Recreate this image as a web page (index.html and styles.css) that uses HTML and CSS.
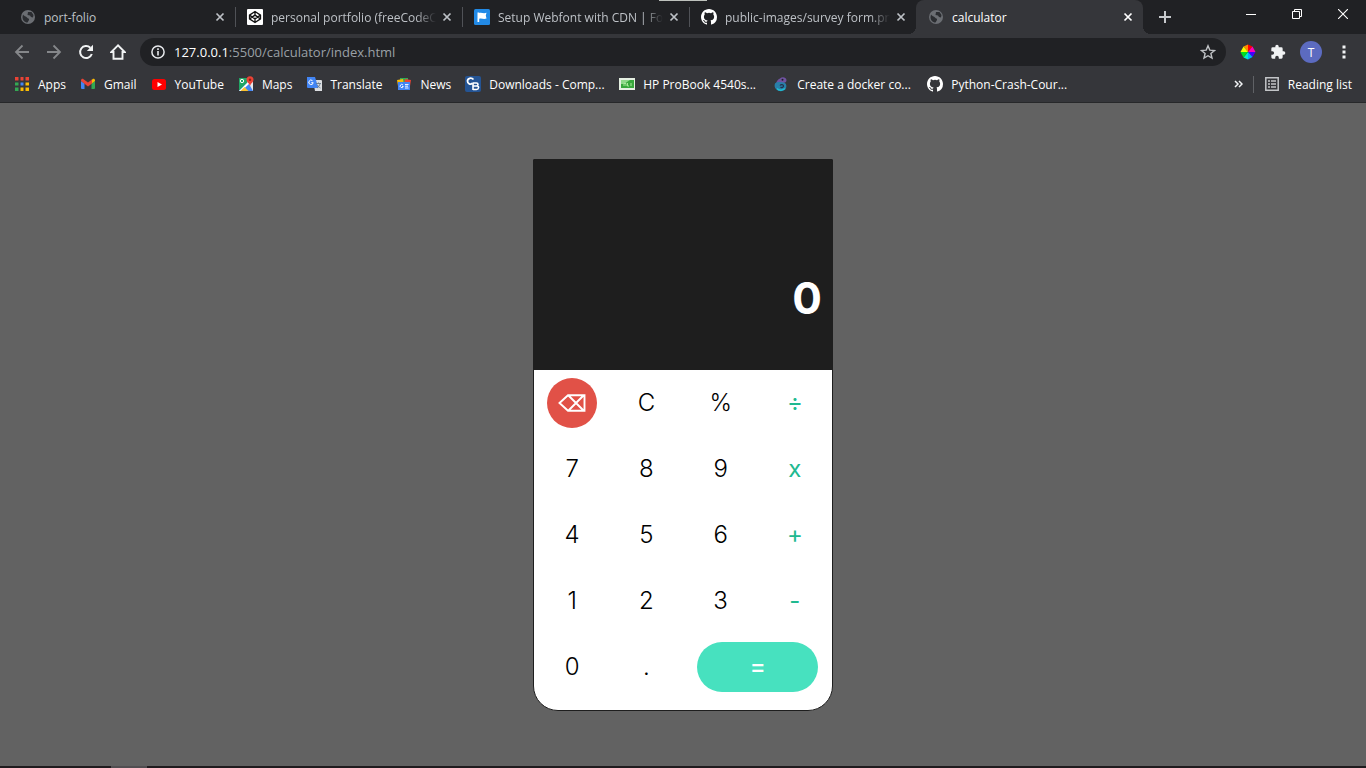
FILE: index.html
```html
<!DOCTYPE html>
<html lang="en">
<head>
<meta charset="utf-8">
<title>calculator</title>
<link rel="stylesheet" href="styles.css">
</head>
<body>
<svg class="defs" width="0" height="0" aria-hidden="true">
  <symbol id="globe" viewBox="0 0 16 16"><circle cx="8" cy="8" r="7" fill="#6b6e73"/><path d="M3 5.500c1 2 3 1.500 4 3 .8 1.200 2.500.8 2 2.500L7.500 13.500C4.500 13.500 2.500 11 2.500 8zM8 3h3.500l2 3-.5 2.500-2-.5-1-1.500-2.500-.5z" fill="#2b2d31"/></symbol>
  <symbol id="close" viewBox="0 0 10 10"><path d="M1.500 1.500l7 7M8.500 1.500l-7 7" stroke="currentColor" stroke-width="1.700" fill="none"/></symbol>
  <symbol id="github" viewBox="0 0 16 16"><path fill="#fff" d="M8 0C3.580 0 0 3.580 0 8c0 3.540 2.290 6.530 5.470 7.590.4.070.55-.17.55-.38 0-.19-.01-.82-.01-1.490-2.010.37-2.530-.49-2.690-.94-.09-.23-.48-.94-.82-1.130-.28-.15-.68-.52-.01-.53.63-.01 1.080.58 1.230.82.72 1.210 1.870.87 2.330.66.07-.52.28-.87.51-1.070-1.780-.2-3.640-.89-3.640-3.950 0-.87.31-1.590.82-2.150-.08-.2-.36-1.020.08-2.120 0 0 .67-.21 2.200.82a7.600 7.600 0 0 1 4 0c1.530-1.040 2.200-.82 2.200-.82.44 1.100.16 1.920.08 2.120.51.56.82 1.270.82 2.150 0 3.070-1.870 3.750-3.650 3.950.29.25.54.73.54 1.480 0 1.070-.01 1.930-.01 2.200 0 .21.15.46.55.38A8 8 0 0 0 16 8c0-4.420-3.580-8-8-8z"/></symbol>
</svg>
<div class="browser">
  <header class="chrome">
    <div class="tabstrip">
      <div class="tab"><svg class="icon"><use href="#globe"/></svg><span class="tab-title">port-folio</span><button class="tab-close" aria-label="Close port-folio"><svg><use href="#close"/></svg></button></div>
      <div class="tab divided"><svg class="icon" viewBox="0 0 16 16"><rect width="16" height="16" rx="1" fill="#fff"/><path d="M8 2.500l5.500 3.600v3.800L8 13.500 2.500 9.900V6.100zM2.500 6.100L8 9.900l5.500-3.800M2.500 9.900L8 6.100l5.500 3.800M8 2.500v3.600M8 9.900v3.600" fill="none" stroke="#111" stroke-width="1.300" stroke-linejoin="round"/></svg><span class="tab-title faded">personal portfolio (freeCodeCa</span><button class="tab-close" aria-label="Close personal portfolio"><svg><use href="#close"/></svg></button></div>
      <div class="tab divided"><svg class="icon" viewBox="0 0 16 16"><rect width="16" height="16" rx="1.500" fill="#228ae6"/><path d="M3.500 3.500h1.700V13H3.500zM5.200 4c2.500-.8 4 .8 7.300-.2l-.7 2.800.7 3c-3.300 1-4.800-.7-7.300.2z" fill="#fff"/></svg><span class="tab-title faded">Setup Webfont with CDN | Fon</span><button class="tab-close" aria-label="Close Setup Webfont"><svg><use href="#close"/></svg></button></div>
      <div class="tab divided"><svg class="icon"><use href="#github"/></svg><span class="tab-title faded">public-images/survey form.png</span><button class="tab-close" aria-label="Close public-images"><svg><use href="#close"/></svg></button></div>
      <div class="tab active"><svg class="icon"><use href="#globe"/></svg><span class="tab-title">calculator</span><button class="tab-close" aria-label="Close calculator"><svg><use href="#close"/></svg></button></div>
      <button class="new-tab" aria-label="New tab"><svg width="12" height="12" viewBox="0 0 12 12"><path d="M6 0v12M0 6h12" stroke="#c6c9cc" stroke-width="2"/></svg></button>
      <div class="window-controls">
        <button aria-label="Minimize"><svg width="10" height="10" viewBox="0 0 10 10"><path d="M0 5.500h10" stroke="#fff"/></svg></button>
        <button aria-label="Restore"><svg width="10" height="10" viewBox="0 0 10 10"><path d="M.5 2.500h7v7h-7zM2.500 2.500v-2h7v7h-2" fill="none" stroke="#fff"/></svg></button>
        <button aria-label="Close window"><svg width="10" height="10" viewBox="0 0 10 10"><path d="M0 0l10 10M10 0L0 10" stroke="#fff" stroke-width="1.100"/></svg></button>
      </div>
      <div class="top-notch"></div>
    </div>

    <div class="toolbar">
      <nav class="nav">
        <button aria-label="Back"><svg viewBox="0 0 16 16"><path d="M15 8H2.500M8.500 1.500L2 8l6.500 6.500" fill="none" stroke="#85878a" stroke-width="1.800"/></svg></button>
        <button aria-label="Forward"><svg viewBox="0 0 16 16"><path d="M1 8h12.500M7.500 1.500L14 8l-6.500 6.500" fill="none" stroke="#85878a" stroke-width="1.800"/></svg></button>
        <button aria-label="Reload"><svg viewBox="0 0 16 16"><path d="M13.800 10A6 6 0 1 1 12.300 3.700" fill="none" stroke="#f1f3f4" stroke-width="2"/><path d="M15 .8v6.200H8.800z" fill="#f1f3f4"/></svg></button>
        <button aria-label="Home"><svg viewBox="0 0 16 16"><path d="M8 1.300L1.300 8h2.200v6.800h9V8h2.200z" fill="none" stroke="#f1f3f4" stroke-width="1.900"/></svg></button>
      </nav>
      <div class="omnibox">
        <svg class="info" viewBox="0 0 14 14"><circle cx="7" cy="7" r="6.100" fill="none" stroke="#e8eaed" stroke-width="1.500"/><path d="M7 6v4.500M7 3.300v1.600" stroke="#e8eaed" stroke-width="1.600"/></svg>
        <label class="host" for="url">127.0.0.1</label>
        <input id="url" class="url" type="text" value=":5500/calculator/index.html">
        <button class="star" aria-label="Bookmark this page"><svg viewBox="0 0 16 16"><path d="M8 1.800l1.800 4.300 4.700.4-3.600 3 1.100 4.600L8 11.700l-4 2.400 1.100-4.600-3.600-3 4.700-.4z" fill="none" stroke="#bfc2c5" stroke-width="1.400"/></svg></button>
      </div>
      <div class="actions">
        <button aria-label="Color picker"><svg viewBox="0 0 16 16"><path d="M8 8L3.500 2.500 8 .5z" fill="#ff8a00"/><path d="M8 8V.5l4.500 2z" fill="#f00"/><path d="M8 8l4.500-5.500L15.500 8z" fill="#f0b"/><path d="M8 8h7.500l-3 5z" fill="#40f"/><path d="M8 8l4.500 5L8 15.500z" fill="#0af"/><path d="M8 8v7.500l-4.500-2z" fill="#0ec"/><path d="M8 8l-4.500 5.500L.5 8z" fill="#0d2"/><path d="M8 8H.5l3-5.500z" fill="#ef0"/></svg></button>
        <button aria-label="Extensions"><svg viewBox="0 0 24 24"><path d="M20.500 11H19V7a2 2 0 0 0-2-2h-4V3.500a2.500 2.500 0 0 0-5 0V5H4a2 2 0 0 0-2 2v3.800h1.500a2.700 2.700 0 0 1 0 5.400H2V20a2 2 0 0 0 2 2h3.800v-1.500a2.700 2.700 0 0 1 5.400 0V22H17a2 2 0 0 0 2-2v-4h1.500a2.500 2.500 0 0 0 0-5z" fill="#f1f3f4"/></svg></button>
        <button class="avatar" aria-label="Profile">T</button>
        <button aria-label="Menu"><svg viewBox="0 0 16 16"><path d="M6.500 1.500h3v3h-3zM6.500 6.500h3v3h-3zM6.500 11.500h3v3h-3z" fill="#f1f3f4"/></svg></button>
      </div>
    </div>

    <nav class="bookmarks">
      <a href="#"><svg class="icon" viewBox="0 0 16 16"><path d="M1 1h4v4H1zM6 1h4v4H6zM11 1h4v4h-4z" fill="#ea4335"/><path d="M1 6h4v4H1z" fill="#34a853"/><path d="M6 6h4v4H6z" fill="#4285f4"/><path d="M11 6h4v4h-4zM6 11h4v4H6zM11 11h4v4h-4z" fill="#fbbc04"/><path d="M1 11h4v4H1z" fill="#34a853"/><path d="M5.500 0v16M10.500 0v16M0 5.500h16M0 10.500h16" stroke="#35363a" stroke-width="2"/></svg><span>Apps</span></a>
      <a href="#"><svg class="icon" viewBox="0 0 16 16"><path d="M1 5l3.500 2.500V13H2a1 1 0 0 1-1-1z" fill="#4285f4"/><path d="M11.500 7.500L15 5v7a1 1 0 0 1-1 1h-2.500z" fill="#34a853"/><path d="M11.500 4l1-.8c1-.8 2.500-.2 2.500 1.300V5l-3.500 2.700z" fill="#fbbc04"/><path d="M1 5v-.5C1 3 2.500 2.400 3.500 3.200L8 6.600l4-3v4L8 10.500z" fill="#ea4335"/></svg><span>Gmail</span></a>
      <a href="#"><svg class="icon" viewBox="0 0 16 16"><rect x="1" y="3" width="14" height="11" rx="2.500" fill="#f00"/><path d="M6.500 6v5L11 8.500z" fill="#fff"/></svg><span>YouTube</span></a>
      <a href="#"><svg class="icon" viewBox="0 0 16 16"><path d="M1 2h14v13H1z" fill="#e6e9ed"/><path d="M1 2h8v7L1 15z" fill="#22a565"/><path d="M1 15L10 6l5 9z" fill="#4285f4"/><path d="M1 15L11 5l1.500 1.500L3.500 15z" fill="#fff"/><path d="M2.500 15l4-4 4 4z" fill="#fbc02d"/><path d="M12 10C11 7 8.500 6 8.500 3.700a3.500 3.500 0 0 1 7 0C15.500 6 13 7 12 10z" fill="#ea4335"/><circle cx="12" cy="3.700" r="1.200" fill="#8e1e16"/><circle cx="4" cy="5" r="1.700" fill="none" stroke="#fff"/></svg><span>Maps</span></a>
      <a href="#"><svg class="icon" viewBox="0 0 16 16"><path d="M7 4h8a1 1 0 0 1 1 1v10H9z" fill="#dcdee1"/><path d="M1 1h8l3.500 11H2a1 1 0 0 1-1-1z" fill="#4285f4"/><path d="M6.500 4.700a2.200 2.200 0 1 0 .7 2H5.300" fill="none" stroke="#fff"/><path d="M10 7.500h5M12.500 6.500v1M11 12c1.500-1 2.800-2.500 3-4.500M11.500 9c.5 1.300 1.500 2.300 3 3" fill="none" stroke="#687b8c" stroke-width=".9"/></svg><span>Translate</span></a>
      <a href="#"><svg class="icon" viewBox="0 0 16 16"><path d="M4 2h8v6H4z" fill="#34a853"/><path d="M1 4l6-1 1 6-6 1z" fill="#fbbc04"/><path d="M9 3l6 1-1 6-6-1z" fill="#ea4335"/><path d="M2 6h12v8H2z" fill="#4285f4"/><path d="M7 9a1.600 1.600 0 1 0 .3 1.500H6M9 8.500h3.500M9 10.200h3M9 12h3.500" fill="none" stroke="#fff" stroke-width=".9"/></svg><span>News</span></a>
      <a href="#" class="long"><svg class="icon" viewBox="0 0 16 16"><rect width="16" height="16" rx="2" fill="#245494"/><path d="M8.500 3.500C6.500 1.300 2.500 2 2.500 5s3 4 5 2.300" fill="none" stroke="#fff" stroke-width="1.800"/><path d="M8 6.500v7.500M8 7h3.500c2 0 2 3 0 3H8.500h3.500c2.300 0 2 3.500-.5 3.500H8" fill="none" stroke="#fff" stroke-width="1.600"/></svg><span>Downloads - Comp...</span></a>
      <a href="#" class="long"><svg class="icon" viewBox="0 0 16 16"><path d="M0 2h16v12H0z" fill="#e4efe1"/><path d="M2 4h13v8H2z" fill="#38a83c"/><path d="M2 4h9L5 8H2z" fill="#8fd98a"/><path d="M5 10V7.500h2V10M8.500 7v3h1.500M12 7v3" fill="none" stroke="#a9e99b"/></svg><span>HP ProBook 4540s...</span></a>
      <a href="#" class="long"><svg class="icon" viewBox="0 0 16 16"><path d="M7 2.500C9 .5 13 1 13.500 4c.2 2-1.500 3-3.500 3L3 8c.5-3 2-4.500 4-5.500z" fill="#7053a1"/><path d="M2 7.500c2-2 6-1.500 9-1 2.500 1 3 4 1.500 6.500-2 2.500-6.500 3-9 .5C1.500 12 1.200 9.500 2 7.500z" fill="#287fa9"/><path d="M4 12.500c2 2.500 6 2 8 0" fill="none" stroke="#20bed2" stroke-width="1.500"/><path d="M7 9.500c1-1.500 3.500-1 3.500.5s-2 2-3 1" fill="none" stroke="#24304a" stroke-width="1.200"/><circle cx="9.500" cy="3.700" r="1" fill="#202124"/></svg><span>Create a docker co...</span></a>
      <a href="#" class="long"><svg class="icon"><use href="#github"/></svg><span>Python-Crash-Cour...</span></a>
      <div class="bookmarks-end">
        <button class="more" aria-label="More bookmarks"><svg width="9" height="8" viewBox="0 0 9 8"><path d="M1 1l3 3-3 3M5 1l3 3-3 3" fill="none" stroke="#f1f3f4" stroke-width="1.500"/></svg></button>
        <a href="#" class="reading"><svg class="icon" viewBox="0 0 16 16"><path d="M1.800 1.800h12.400v12.400H1.800z" fill="none" stroke="#c3c5c8" stroke-width="1.500"/><path d="M4 5h2M7 5h5M4 8h2M7 8h5M4 11h2M7 11h5" stroke="#c3c5c8" stroke-width="1.500"/></svg><span>Reading list</span></a>
      </div>
    </nav>
  </header>

  <main class="page">
    <section class="calculator" aria-label="Calculator">
      <output class="display">0</output>
      <div class="keys">
        <button class="key delete" aria-label="Delete"><svg width="28" height="18" viewBox="0 0 28 18"><path d="M1.500 9l8.500-7.800h16.500v15.600H10zM10 1l15.500 15.500M10 17L25.500 1.500" fill="none" stroke="#fff" stroke-width="1.900"/></svg></button>
        <button class="key">C</button><button class="key">%</button><button class="key op">÷</button>
        <button class="key">7</button><button class="key">8</button><button class="key">9</button><button class="key op">x</button>
        <button class="key">4</button><button class="key">5</button><button class="key">6</button><button class="key op">+</button>
        <button class="key">1</button><button class="key">2</button><button class="key">3</button><button class="key op">-</button>
        <button class="key">0</button><button class="key">.</button><button class="key equals">=</button>
      </div>
    </section>
  </main>
  <footer class="taskbar"><span class="task"></span></footer>
</div>
</body>
</html>
```

FILE: styles.css
```css
* { box-sizing: border-box; }
body { margin: 0; background: #626262; font-family: "Open Sans", "Noto Sans", sans-serif; font-size: 12px; color: #fff; }
button { border: 0; padding: 0; margin: 0; background: none; color: inherit; font: inherit; display: flex; align-items: center; justify-content: center; }
a { color: inherit; text-decoration: none; }
.defs { position: absolute; }
.icon { width: 16px; height: 16px; flex: none; }
.browser { min-height: 100vh; display: flex; flex-direction: column; }
.chrome { background: #35363a; border-bottom: 1px solid #27282a; }

.tabstrip { position: relative; display: flex; height: 34px; padding-left: 8px; background: #202124; }
.tab { position: relative; display: flex; align-items: center; flex: 0 1 227px; min-width: 0; padding: 0 10px 0 12px; color: #bdc1c6; }
.tab.divided::before { content: ""; position: absolute; left: 0; top: 7px; width: 1px; height: 20px; background: #505257; }
.tab-title { flex: 1; min-width: 0; margin-left: 8px; overflow: hidden; white-space: nowrap; }
.faded { mask-image: linear-gradient(90deg, #000 calc(100% - 20px), transparent); }
.tab-close { width: 10px; height: 10px; margin-left: 6px; }
.tab-close svg { width: 10px; height: 10px; }
.tab.active { background: #35363a; color: #fff; border-radius: 8px 8px 0 0; }
.tab.active::before, .tab.active::after { content: ""; position: absolute; bottom: 0; width: 8px; height: 8px; }
.tab.active::before { left: -8px; background: radial-gradient(circle at 0 0, #202124 8px, #35363a 8px); }
.tab.active::after { right: -8px; background: radial-gradient(circle at 100% 0, #202124 8px, #35363a 8px); }
.new-tab { width: 44px; }
.window-controls { display: flex; height: 28px; margin-left: auto; }
.window-controls button { width: 46px; }
.top-notch { position: absolute; left: 659px; top: 0; width: 48px; height: 1px; background: #bec2bd; }

.toolbar { display: flex; align-items: center; height: 36px; }
.nav { display: flex; gap: 16px; padding: 0 14px; }
.nav button, .nav svg { width: 16px; height: 16px; }
.omnibox { display: flex; align-items: center; flex: 1; height: 28px; padding: 0 10px 0 11px; border-radius: 14px; background: #202124; font-size: 13px; }
.info { width: 14px; height: 14px; margin-right: 9px; }
.url { flex: 1; min-width: 0; padding: 0; border: 0; outline: 0; background: none; color: #9aa0a6; font: inherit; }
.star, .star svg { width: 16px; height: 16px; }
.actions { display: flex; align-items: center; gap: 14px; padding: 0 14px; }
.actions button, .actions svg { width: 16px; height: 16px; }
.actions .avatar { width: 22px; height: 22px; border-radius: 50%; background: #5c6bc0; }

.bookmarks { display: flex; align-items: center; height: 32px; padding: 0 14px 4px; }
.bookmarks a { display: flex; align-items: center; gap: 8px; margin-right: 14px; white-space: nowrap; }
.bookmarks .long { width: 140px; }
.bookmarks-end { display: flex; align-items: center; margin-left: auto; }
.more { padding-right: 10px; }
.bookmarks .reading { margin: 0; padding-left: 10px; border-left: 1px solid #606266; }

.page { flex: 1; display: flex; align-items: center; justify-content: center; }
.calculator { width: 300px; border: 1px solid #1e1e1e; border-radius: 0 0 25px 25px; background: #fff; font-family: Inter, sans-serif; }
.display { display: flex; align-items: flex-end; justify-content: flex-end; height: 210px; padding: 0 10px 44px; background: #1e1e1e; font-size: 44px; font-weight: 700; line-height: 56px; }
.keys { display: grid; grid-template-columns: repeat(4, 1fr); grid-auto-rows: 66px; align-items: center; justify-items: center; padding: 0 0 10px 1px; }
.key { width: 50px; height: 50px; border-radius: 25px; color: #000; font-size: 24px; font-weight: 300; }
.op { color: #20b990; font-weight: 400; }
.delete { background: #e15147; }
.equals { grid-column: span 2; width: 121px; background: #47e1bf; color: #fff; font-weight: 500; }

.taskbar { display: flex; height: 2px; padding-left: 111px; background: #1f1b1e; }
.task { width: 36px; background: #514e51; }
```
